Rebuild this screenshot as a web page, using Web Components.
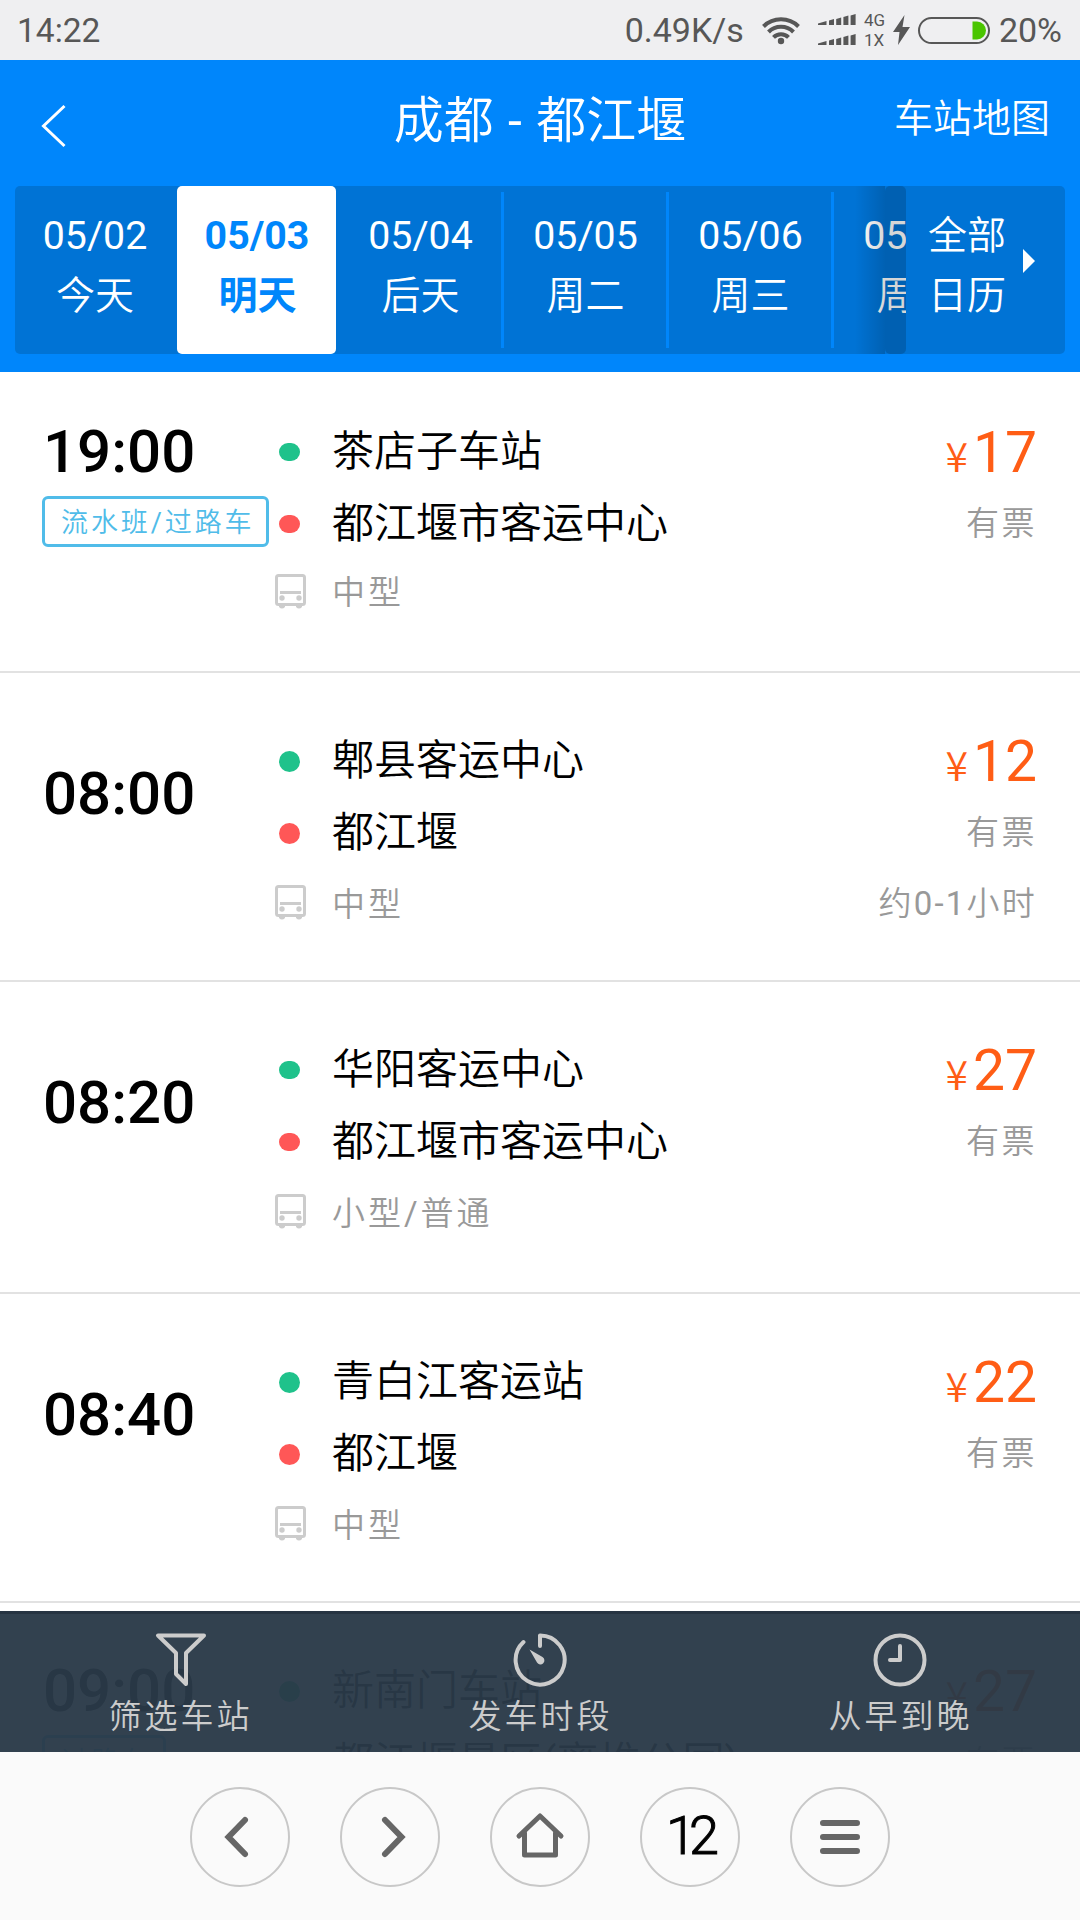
<!DOCTYPE html>
<html lang="zh-CN">
<head>
<meta charset="utf-8">
<title>成都 - 都江堰</title>
<style>
  html, body {
    margin: 0;
    padding: 0;
  }

  body {
    width: 1080px;
    height: 1920px;
    overflow: hidden;
    background: #fff;
    font-family: Roboto, "Noto Sans CJK SC DemiLight", "Noto Sans CJK SC", sans-serif;
  }
</style>
</head>
<body>
<bus-app></bus-app>

<script>
class StatusBar extends HTMLElement {
  constructor() {
    super();
    this.attachShadow({ mode: 'open' });
  }

  connectedCallback() {
    const bars = (y) => [2.5, 6, 7.5, 9.5, 11].map((h, i) => i === 0
      ? `<path d="M0 ${y + 11}V${y + 9.6}L8.500 ${y + 7}V${y + 11}z"/>`
      : `<path d="M${3.8 + i * 7.2} ${y + 11}v${1.5 - h}l5 -1.500v${h}z"/>`).join('');

    this.shadowRoot.innerHTML = `
      <style>
        :host {
          display: flex;
          align-items: center;
          height: 60px;
          padding: 0 18px 0 17px;
          box-sizing: border-box;
          background: #efeff1;
          color: #575757;
          font-size: 34px;
          line-height: 60px;
        }
        .clock { font-size: 33.500px; padding-top: 1px; }
        .speed { margin-left: auto; }
        .wifi { margin-left: 18px; }
        .signal { margin-left: 18px; }
        .net {
          display: flex;
          flex-direction: column;
          margin-left: 8px;
          width: 25px;
          font-size: 17px;
          line-height: 20px;
        }
        .bolt { margin-left: 4px; }
        .battery { margin: 0 9px 0 8px; }
        svg { display: block; }
      </style>
      <span class="clock">14:22</span>
      <span class="speed">0.49K/s</span>
      <svg class="wifi" width="38" height="30" viewBox="0 0 38 30" fill="none" stroke="#575757" stroke-width="4">
        <path d="M1.500 11.500A25 25 0 0 1 36.500 11.500"/>
        <path d="M6.500 17A17.500 17.500 0 0 1 31.500 17"/>
        <path d="M11.500 22.300A10.500 10.500 0 0 1 26.500 22.300"/>
        <circle cx="19" cy="26" r="3.200" fill="#575757" stroke="none"/>
      </svg>
      <svg class="signal" width="38" height="32" viewBox="0 0 38 32" fill="#575757">${bars(0)}${bars(20)}</svg>
      <span class="net"><span>4G</span><span>1X</span></span>
      <svg class="bolt" width="17" height="30" viewBox="0 0 17 30" fill="#575757"><path d="M11.500 0L0 17H6.500L5 30L17 12H9.500z"/></svg>
      <svg class="battery" width="72" height="27" viewBox="0 0 72 27">
        <rect x="1" y="1" width="70" height="25" rx="12.500" fill="none" stroke="#575757" stroke-width="2"/>
        <path d="M54.500 4.500H59A9 9 0 0 1 59 22.500H54.500z" fill="#4ac500"/>
      </svg>
      <span>20%</span>
    `;
  }
}

class PageHeader extends HTMLElement {
  constructor() {
    super();
    this.attachShadow({ mode: 'open' });
  }

  connectedCallback() {
    this.shadowRoot.innerHTML = `
      <style>
        :host {
          display: grid;
          grid-template-columns: 250px 1fr 250px;
          height: 126px;
          color: #fff;
          line-height: 118px;
          white-space: nowrap;
        }
        svg { margin: 44px 0 0 41px; }
        .title {
          padding-top: 2px;
          text-align: center;
          font-size: 50px;
          word-spacing: 2px;
        }
        .action { text-align: right; padding-right: 30px; font-size: 39px; }
      </style>
      <svg width="26" height="44" viewBox="0 0 26 44" fill="none" stroke="#fff" stroke-width="3"><path d="M23.500 2L2.500 22L23.500 42"/></svg>
      <span class="title"><slot></slot></span>
      <span class="action">${this.getAttribute('action')}</span>
    `;
  }
}

class DateTabs extends HTMLElement {
  constructor() {
    super();
    this.attachShadow({ mode: 'open' });
    this.days = [
      { date: '05/02', label: '今天' },
      { date: '05/03', label: '明天', active: true },
      { date: '05/04', label: '后天' },
      { date: '05/05', label: '周二' },
      { date: '05/06', label: '周三' },
      { date: '05/07', label: '周四' }
    ];
  }

  connectedCallback() {
    this.shadowRoot.innerHTML = `
      <style>
        :host {
          display: flex;
          height: 168px;
          margin: 0 15px;
          border-radius: 5px;
          background: #0073d5;
          color: #fff;
          font-size: 39px;
          line-height: 60px;
          overflow: hidden;
        }
        .days {
          position: relative;
          display: flex;
          width: 891px;
          overflow: hidden;
        }
        .day {
          flex: 0 0 165px;
          display: flex;
          flex-direction: column;
          align-items: center;
          padding: 20px 2px 0 0;
          box-sizing: border-box;
          background: linear-gradient(#0086fb, #0086fb) no-repeat right 6px / 3px 156px;
        }
        .day:first-child { flex-basis: 162px; background: none; }
        .day b { font-weight: 400; font-size: 39.300px; }
        .day.active {
          flex-basis: 159px;
          margin-right: 3px;
          padding-right: 0;
          border-radius: 5px;
          background: #fff;
          color: #0086fb;
          font-family: Roboto, "Noto Sans CJK SC", sans-serif;
          font-weight: 700;
        }
        .day.active span { margin-left: 2px; }
        .day.active b { font-weight: 700; margin-left: 1px; }
        .fade {
          position: absolute;
          right: 21px;
          top: 0;
          width: 30px;
          height: 168px;
          background: linear-gradient(to right, rgba(0, 0, 0, 0), rgba(0, 0, 0, .16));
        }
        .edge {
          position: absolute;
          right: 0;
          top: 0;
          width: 21px;
          height: 168px;
          border-radius: 5px;
          background: rgba(0, 0, 0, .16);
        }
        .all {
          flex: 1;
          display: flex;
          align-items: center;
          gap: 17px;
          padding-left: 22px;
        }
        .all span { width: 78px; padding-bottom: 8px; }
        .all svg { margin-bottom: 18px; }
      </style>
      <div class="days">
        ${this.days.map((d) => `
          <div class="day ${d.active ? 'active' : ''}"><b>${d.date}</b><span>${d.label}</span></div>
        `).join('')}
        <div class="fade"></div>
        <div class="edge"></div>
      </div>
      <div class="all">
        <span>全部<br>日历</span>
        <svg width="12" height="24" viewBox="0 0 12 24" fill="#fff"><path d="M0 0L12 12L0 24z"/></svg>
      </div>
    `;
  }
}

class TripRow extends HTMLElement {
  constructor() {
    super();
    this.attachShadow({ mode: 'open' });
  }

  connectedCallback() {
    const get = (name) => this.getAttribute(name) || '';
    const tag = get('tag');

    this.shadowRoot.innerHTML = `
      <style>
        :host {
          display: grid;
          grid-template-columns: 233px 1fr auto;
          height: 309px;
          padding: 52px 43px 0 42px;
          box-sizing: border-box;
          border-bottom: 2px solid #e2e2e2;
          line-height: 72px;
          white-space: nowrap;
        }
        .when { padding-top: ${tag ? 0 : 33}px; }
        .time { display: block; margin-left: 1px; font-size: 60px; font-weight: 500; color: #000; }
        .tag {
          display: inline-block;
          height: 51px;
          margin-top: 8px;
          padding: 0 12px 0 16px;
          box-sizing: border-box;
          border: 3px solid #50bce9;
          border-radius: 6px;
          color: #50bce9;
          font-size: 27px;
          letter-spacing: 2.900px;
          line-height: 48px;
        }
        .station, .type { display: flex; align-items: center; }
        .station { font-size: 42px; color: #000; }
        .station i {
          width: 21px;
          height: var(--dot-height, 21px);
          margin: 0 32px 0 4px;
          border-radius: 11px;
          background: #1fc28b;
        }
        .station.to i { background: #ff5757; }
        .type { gap: 26px; height: var(--type-height, 71px); line-height: var(--type-height, 71px); }
        .type svg { margin: -4px 0 0; }
        .type, .info { color: #999; font-size: 33px; letter-spacing: 3px; }
        .side { text-align: right; }
        .price { font-size: 57px; color: #ff5d15; padding-top: 1px; }
        .price small {
          margin-right: 5px;
          font: 41px "Noto Sans CJK SC DemiLight", "Noto Sans CJK SC", sans-serif;
          line-height: 1;
        }
        .info { display: block; letter-spacing: 2.500px; }
        .price + .info { margin-top: -1px; }
        .duration { margin-top: -1px; letter-spacing: 2.200px; }
      </style>
      <div class="when">
        <span class="time">${get('time')}</span>
        ${tag ? `<span class="tag">${tag}</span>` : ''}
      </div>
      <div>
        <span class="station"><i></i>${get('from')}</span>
        <span class="station to"><i></i>${get('to')}</span>
        <span class="type">
          <svg width="31" height="35" viewBox="0 0 31 35" fill="none" stroke="#ccc" stroke-width="3">
            <rect x="1.500" y="1.500" width="28" height="29" rx="2"/>
            <path d="M5 18.500H26M5 30.500H10M21 30.500H26"/>
            <g fill="#ccc" stroke="none">
              <circle cx="7" cy="24" r="2.700"/><circle cx="24" cy="24" r="2.700"/>
              <path d="M4 31H10V33Q7 36 4 33zM21 31H27V33Q24 36 21 33z"/>
            </g>
          </svg>
          ${get('type')}
        </span>
      </div>
      <div class="side">
        <div class="price"><small>¥</small>${get('price')}</div>
        <span class="info">有票</span>
        <span class="info duration">${get('duration')}</span>
      </div>
    `;
  }
}

class FilterBar extends HTMLElement {
  constructor() {
    super();
    this.attachShadow({ mode: 'open' });
  }

  connectedCallback() {
    const items = [
      { label: '筛选车站', icon: '<path d="M6 3.500H52L34 21V52L24 42V21z"/>' },
      { label: '发车时段', icon: '<path d="M28 14V3.500A24.500 24.500 0 1 1 11.500 10"/><path d="M17.500 17.500L30.500 25A4 4 0 1 1 25 30.500z" fill="#ccc" stroke="none"/>' },
      { label: '从早到晚', icon: '<circle cx="28" cy="28" r="24.500"/><path d="M28 14V28H18"/>' }
    ];

    this.shadowRoot.innerHTML = `
      <style>
        :host {
          display: grid;
          grid-template-columns: repeat(3, 1fr);
          height: 141px;
          box-sizing: border-box;
          border-top: 3px solid #273442;
          background: rgba(42, 57, 72, .96);
          background-clip: padding-box;
          color: #ccc;
          font-size: 33px;
          letter-spacing: 3px;
          line-height: 50px;
        }
        div {
          display: flex;
          flex-direction: column;
          align-items: center;
          padding-top: 18px;
        }
        span { margin: 4px -1px 0 0; }
      </style>
      ${items.map((item) => `
        <div>
          <svg width="56" height="56" viewBox="0 0 56 56" fill="none" stroke="#ccc" stroke-width="4" stroke-linecap="round" stroke-linejoin="round">${item.icon}</svg>
          <span>${item.label}</span>
        </div>
      `).join('')}
    `;
  }
}

class BrowserBar extends HTMLElement {
  constructor() {
    super();
    this.attachShadow({ mode: 'open' });
  }

  connectedCallback() {
    const icon = (body) => `<svg width="60" height="60" viewBox="0 0 60 60" fill="none" stroke="#666" stroke-width="6" stroke-linecap="round">${body}</svg>`;
    const buttons = [
      icon('<path d="M35 13L18.500 30L35 47"/>'),
      icon('<path d="M25 13L41.500 30L25 47"/>'),
      icon('<path d="M9 29L30 9L51 29M14.500 26V48H45.500V26" stroke-width="5" stroke-linejoin="round"/>'),
      '<span>12</span>',
      icon('<path d="M13 16H47M13 30H47M13 44H47"/>')
    ];

    this.shadowRoot.innerHTML = `
      <style>
        :host {
          display: flex;
          justify-content: center;
          gap: 50px;
          height: 168px;
          padding-top: 35px;
          box-sizing: border-box;
          background: #fafafa;
        }
        button {
          display: flex;
          align-items: center;
          justify-content: center;
          width: 100px;
          height: 100px;
          padding: 0;
          border: 2px solid #c8c8c8;
          border-radius: 50%;
          background: none;
        }
        span {
          margin: 0 2px 2px 0;
          font: 300 54px/94px Roboto, sans-serif;
          letter-spacing: -7px;
          color: #000;
          -webkit-text-stroke: 1px #000;
        }
      </style>
      ${buttons.map((b) => `<button>${b}</button>`).join('')}
    `;
  }
}

class BusApp extends HTMLElement {
  constructor() {
    super();
    this.attachShadow({ mode: 'open' });
  }

  connectedCallback() {
    this.shadowRoot.innerHTML = `
      <style>
        :host {
          display: flex;
          flex-direction: column;
          position: relative;
          height: 1920px;
          overflow: hidden;
        }
        .top { height: 312px; background: #0086fb; }
        .list { height: 1380px; overflow: hidden; }
        .list trip-row:first-child {
          height: 301px;
          padding-top: 44px;
          --dot-height: 18px;
          --type-height: 66px;
        }
        .list trip-row:nth-child(3) { height: 312px; --dot-height: 18px; }
        filter-bar {
          position: absolute;
          left: 0;
          right: 0;
          bottom: 168px;
        }
      </style>
      <status-bar></status-bar>
      <div class="top">
        <page-header action="车站地图">成都 - 都江堰</page-header>
        <date-tabs></date-tabs>
      </div>
      <div class="list">
        <trip-row time="19:00" tag="流水班/过路车" from="茶店子车站" to="都江堰市客运中心" type="中型" price="17"></trip-row>
        <trip-row time="08:00" from="郫县客运中心" to="都江堰" type="中型" price="12" duration="约0-1小时"></trip-row>
        <trip-row time="08:20" from="华阳客运中心" to="都江堰市客运中心" type="小型/普通" price="27"></trip-row>
        <trip-row time="08:40" from="青白江客运站" to="都江堰" type="中型" price="22"></trip-row>
        <trip-row time="09:00" tag="过路车" from="新南门车站" to="都江堰景区(离堆公园)" type="中型" price="27"></trip-row>
      </div>
      <filter-bar></filter-bar>
      <browser-bar></browser-bar>
    `;
  }
}

customElements.define('status-bar', StatusBar);
customElements.define('page-header', PageHeader);
customElements.define('date-tabs', DateTabs);
customElements.define('trip-row', TripRow);
customElements.define('filter-bar', FilterBar);
customElements.define('browser-bar', BrowserBar);
customElements.define('bus-app', BusApp);
</script>
</body>
</html>
